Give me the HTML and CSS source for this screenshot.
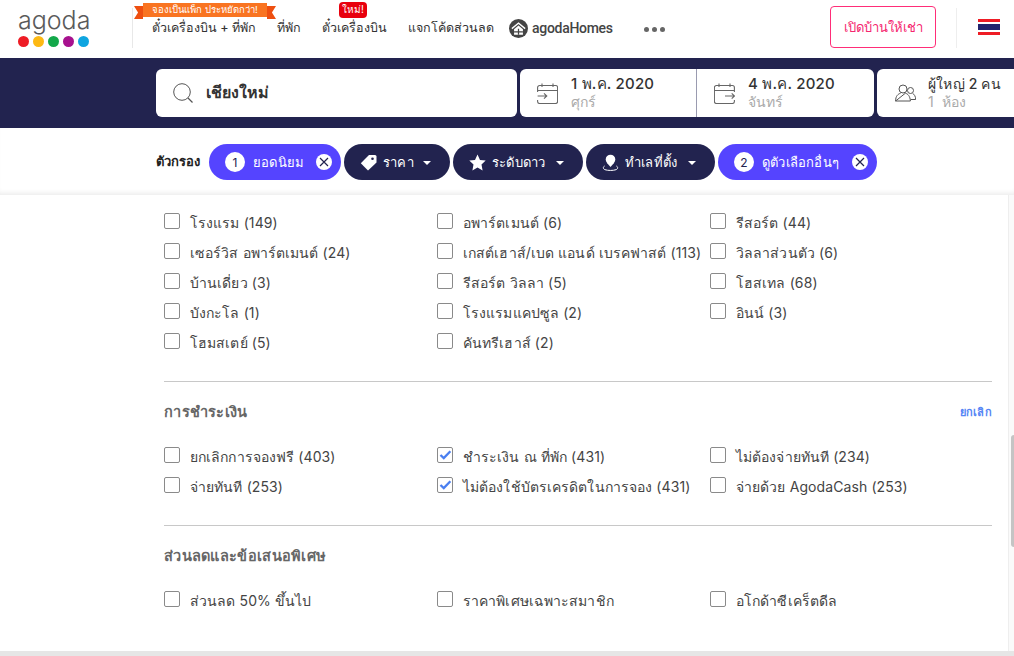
FILE: index.html
```html
<!DOCTYPE html>
<html lang="th">
<head>
<meta charset="utf-8">
<title>agoda</title>
<link rel="stylesheet" href="styles.css">
</head>
<body>
<header class="topbar">
  <div class="logo">
    <div class="logo-word">agoda</div>
    <div class="dots"><i class="d1"></i><i class="d2"></i><i class="d3"></i><i class="d4"></i><i class="d5"></i></div>
  </div>
  <nav class="nav">
    <a class="nav-item first"><span class="ribbon">จองเป็นแพ็ก ประหยัดกว่า!</span>ตั๋วเครื่องบิน + ที่พัก</a>
    <a class="nav-item">ที่พัก</a>
    <a class="nav-item"><span class="new">ใหม่!</span>ตั๋วเครื่องบิน</a>
    <a class="nav-item">แจกโค้ดส่วนลด</a>
    <a class="nav-item homes">
      <svg class="home-ico" width="19" height="19" viewBox="0 0 18 18"><circle cx="9" cy="9" r="9" fill="#444"/><path d="M9 3 2.300 8.600l.8 1L9 4.700l5.900 4.900.8-1z" fill="#fff"/><path d="M4.800 9.600 9 6.100l4.200 3.500V15H4.800z" fill="#fff"/><path d="M8.400 9.300h1.200V15H8.400zM4.800 11.700h8.400v1H4.800z" fill="#444"/></svg>
      agodaHomes
    </a>
    <span class="more"><i></i><i></i><i></i></span>
  </nav>
  <a class="list-btn">เปิดบ้านให้เช่า</a>
  <span class="flag-sep"><span class="flag"></span></span>
</header>

<section class="searchband">
  <div class="box search">
    <svg width="20" height="20" viewBox="0 0 20 20" fill="none" stroke="#555" stroke-width="1"><circle cx="9" cy="9" r="8.300"/><path d="M15 15l4.500 4.500" stroke-width="1.300"/></svg>
    <span class="q">เชียงใหม่</span>
  </div>
  <div class="box dates">
    <div class="date">
      <svg width="21" height="21" viewBox="0 0 21 21" fill="none" stroke="#666" stroke-width="1.100"><path d="M.6 9V4.500a2 2 0 0 1 2-2h16a2 2 0 0 1 2 2v14a2 2 0 0 1-2 2h-16a2 2 0 0 1-2-2V17M.6 7.500h20M5 .5v3.500M16 .5v3.500M.6 13h9M7 10.300 9.800 13 7 15.700"/></svg>
      <div class="dt"><div class="l1">1 พ.ค. 2020</div><div class="l2">ศุกร์</div></div>
    </div>
    <div class="date second">
      <svg width="21" height="21" viewBox="0 0 21 21" fill="none" stroke="#666" stroke-width="1.100"><path d="M20.400 9V4.500a2 2 0 0 0-2-2h-16a2 2 0 0 0-2 2v14a2 2 0 0 0 2 2h16a2 2 0 0 0 2-2V17M.6 7.500h20M5 .5v3.500M16 .5v3.500M11 13h9.500M17.700 10.300 20.500 13l-2.800 2.700"/></svg>
      <div class="dt"><div class="l1">4 พ.ค. 2020</div><div class="l2">จันทร์</div></div>
    </div>
  </div>
  <div class="box occ">
    <svg width="21" height="18" viewBox="0 0 21 18" fill="none" stroke="#555" stroke-width="1"><circle cx="8" cy="5" r="4"/><path d="M.6 17c0-5 2.400-7 5-7.800M10.400 9.200c2.600.8 4.600 2.800 5 7.800H.6z"/><circle cx="15.500" cy="6.500" r="3"/><path d="M15.700 15.500h5c0-3-1.500-5.300-3-6"/></svg>
    <div class="dt"><div class="l1">ผู้ใหญ่ 2 คน</div><div class="l2">1 &nbsp;ห้อง</div></div>
  </div>
</section>

<section class="filters">
  <span class="f-label">ตัวกรอง</span>
  <span class="pill active p1"><b class="num">1</b>ยอดนิยม<b class="x"><svg width="10" height="10" viewBox="0 0 10 10" stroke="#22234f" stroke-width="1.200"><path d="M1 1l8 8M9 1l-8 8"/></svg></b></span>
  <span class="pill p2"><svg width="17" height="17" viewBox="0 0 17 17" fill="#fff"><path d="M9 1h6a1.500 1.500 0 0 1 1.500 1.500v6L8 16.500 .8 9.300z"/><circle cx="12.500" cy="4.800" r="1.300" fill="#22234f"/></svg>ราคา<i class="caret"></i></span>
  <span class="pill p3"><svg width="17" height="17" viewBox="0 0 17 17" fill="#fff"><path d="M8.500.5l2.500 5.400 5.700.7-4.200 4 1.100 5.900-5.100-2.900-5.100 2.900 1.100-5.900-4.200-4 5.700-.7z"/></svg>ระดับดาว<i class="caret"></i></span>
  <span class="pill p4"><svg width="17" height="17" viewBox="0 0 17 17" fill="#fff"><circle cx="8.500" cy="5.500" r="4.800"/><path d="M5 9l3.500 4L12 9z"/><path d="M2.500 12C1 13 .8 14.800 3 15.700c3 1 8 1 11 0 2.200-.9 2-2.700.5-3.700" fill="none" stroke="#fff"/></svg>ทำเลที่ตั้ง<i class="caret"></i></span>
  <span class="pill active p5"><b class="num">2</b>ดูตัวเลือกอื่นๆ<b class="x"><svg width="10" height="10" viewBox="0 0 10 10" stroke="#22234f" stroke-width="1.200"><path d="M1 1l8 8M9 1l-8 8"/></svg></b></span>
</section>

<main class="panel">
  <div class="scrollbar"><span class="thumb"></span></div>
  <div class="content">
    <div class="grid top">
      <label class="opt"><i class="cb"></i>โรงแรม (149)</label>
      <label class="opt"><i class="cb"></i>อพาร์ตเมนต์ (6)</label>
      <label class="opt"><i class="cb"></i>รีสอร์ต (44)</label>
      <label class="opt"><i class="cb"></i>เซอร์วิส อพาร์ตเมนต์ (24)</label>
      <label class="opt"><i class="cb"></i>เกสต์เฮาส์/เบด แอนด์ เบรคฟาสต์ (113)</label>
      <label class="opt"><i class="cb"></i>วิลลาส่วนตัว (6)</label>
      <label class="opt"><i class="cb"></i>บ้านเดี่ยว (3)</label>
      <label class="opt"><i class="cb"></i>รีสอร์ต วิลลา (5)</label>
      <label class="opt"><i class="cb"></i>โฮสเทล (68)</label>
      <label class="opt"><i class="cb"></i>บังกะโล (1)</label>
      <label class="opt"><i class="cb"></i>โรงแรมแคปซูล (2)</label>
      <label class="opt"><i class="cb"></i>อินน์ (3)</label>
      <label class="opt"><i class="cb"></i>โฮมสเตย์ (5)</label>
      <label class="opt"><i class="cb"></i>คันทรีเฮาส์ (2)</label>
    </div>
    <div class="section">
      <div class="sec-head"><h3>การชำระเงิน</h3><a class="clear">ยกเลิก</a></div>
      <div class="grid">
        <label class="opt"><i class="cb"></i>ยกเลิกการจองฟรี (403)</label>
        <label class="opt"><i class="cb on"><svg width="17" height="14" viewBox="0 0 17 14" fill="none" stroke="#4a7ff0" stroke-width="2.800"><path d="M3 7l4 3.800L15 2.500"/></svg></i>ชำระเงิน ณ ที่พัก (431)</label>
        <label class="opt"><i class="cb"></i>ไม่ต้องจ่ายทันที (234)</label>
        <label class="opt"><i class="cb"></i>จ่ายทันที (253)</label>
        <label class="opt"><i class="cb on"><svg width="17" height="14" viewBox="0 0 17 14" fill="none" stroke="#4a7ff0" stroke-width="2.800"><path d="M3 7l4 3.800L15 2.500"/></svg></i>ไม่ต้องใช้บัตรเครดิตในการจอง (431)</label>
        <label class="opt"><i class="cb"></i>จ่ายด้วย AgodaCash (253)</label>
      </div>
    </div>
    <div class="section">
      <div class="sec-head"><h3>ส่วนลดและข้อเสนอพิเศษ</h3></div>
      <div class="grid">
        <label class="opt"><i class="cb"></i>ส่วนลด 50% ขึ้นไป</label>
        <label class="opt"><i class="cb"></i>ราคาพิเศษเฉพาะสมาชิก</label>
        <label class="opt"><i class="cb"></i>อโกด้าซีเคร็ตดีล</label>
      </div>
    </div>
    <div class="section end"></div>
  </div>
</main>
<div class="bottom"></div>
</body>
</html>
```
FILE: styles.css
```css
* { box-sizing: border-box; }
html, body { margin: 0; height: 656px; overflow: hidden; }
body { width: 1014px; background: #fff; color: #333; font-family: Inter, "Noto Sans", "Liberation Sans", sans-serif; font-size: 14px; }
i, b { font-style: normal; }

.topbar { height: 58px; display: flex; align-items: flex-start; background: #fff; }
.logo { width: 132px; padding: 7px 0 0 18px; flex: none; height: 50px; }
.logo-word { font-family: Inter, sans-serif; font-weight: 300; font-size: 25px; line-height: 26px; color: #5a5a5a; }
.dots { display: flex; gap: 4px; margin: 3px 0 0 0; }
.dots i { width: 11px; height: 11px; border-radius: 50%; }
.d1 { background: #ee1c25; } .d2 { background: #fdb913; } .d3 { background: #13a84a; } .d4 { background: #a7118e; } .d5 { background: #0fa5e0; }

.nav { height: 40px; margin-top: 8px; width: 698px; flex: none; border-left: 1px solid #e8e8e8; display: flex; align-items: flex-start; padding-left: 19px; gap: 21px; }
.nav-item { position: relative; padding-top: 10px; font-size: 12.5px; line-height: 20px; font-weight: 500; color: #333; white-space: nowrap; display: flex; align-items: center; gap: 4px; }
.ribbon { position: absolute; left: -9px; top: -5px; width: 124px; height: 14px; background: #f97421; color: #fff; font-size: 9.5px; line-height: 14px; font-weight: 400; text-align: center; }
.ribbon::before, .ribbon::after { content: ""; position: absolute; top: 3px; width: 9px; height: 13px; background: #ee4f10; }
.ribbon::before { left: -9px; clip-path: polygon(0 0, 100% 0, 100% 100%, 0 100%, 45% 50%); }
.ribbon::after { right: -9px; clip-path: polygon(0 0, 100% 0, 55% 50%, 100% 100%, 0 100%); }
.new { position: absolute; left: 17px; top: -6px; height: 16px; padding: 0 3px; background: #e8000d; color: #fff; font-size: 10px; line-height: 15px; font-weight: 400; border-radius: 4px; }
.home-ico { flex: none; }
.homes { margin-left: -6px; color: #444; font-family: Roboto, sans-serif; font-size: 14px; letter-spacing: -.3px; }
.more { display: flex; gap: 3px; margin: 19px 0 0 10px; }
.more i { width: 5px; height: 5px; border-radius: 50%; background: #666; }

.list-btn { margin-top: 6px; width: 106px; height: 42px; flex: none; border: 1px solid #ff2d78; border-radius: 4px; color: #f5266f; font-size: 13px; font-weight: 500; display: flex; align-items: center; justify-content: center; }
.flag-sep { margin: 8px 0 0 20px; width: 58px; height: 40px; border-left: 1px solid #eee; padding: 11px 0 0 21px; flex: none; }
.flag { display: block; width: 22px; height: 16px; background: linear-gradient(#ee1c25 0 3px, #fff 3px 5px, #22246e 5px 11px, #fff 11px 13px, #ee1c25 13px); }

.searchband { height: 70px; background: #22234f; padding: 11px 0 0 156px; display: flex; gap: 3px; overflow: hidden; }
.box { height: 48px; background: #fff; border-radius: 6px; flex: none; display: flex; align-items: center; }
.search { width: 361px; padding-left: 17px; gap: 13px; }
.q { font-size: 16px; font-weight: 600; color: #333; margin-top: -2px; }
.dates { width: 354px; }
.date { width: 176px; height: 100%; padding-left: 17px; display: flex; align-items: center; gap: 13px; }
.date.second { width: 178px; border-left: 1px solid #9a9bb0; padding-left: 17px; }
.occ { width: 160px; padding-left: 18px; gap: 12px; }
.l1 { font-size: 15px; line-height: 18px; font-weight: 500; color: #333; white-space: nowrap; letter-spacing: .2px; }
.occ .l1 { font-size: 14px; }
.l2 { font-size: 14px; line-height: 18px; color: #aaa; }

.filters { height: 67px; padding: 16px 0 0 156px; display: flex; align-items: flex-start; background: #fff; box-shadow: inset 0 -5px 5px -3px #ececec; }
.f-label { width: 53px; font-size: 13px; font-weight: 600; line-height: 34px; color: #222; white-space: nowrap; letter-spacing: .1px; }
.pill { height: 36px; border-radius: 18px; background: #22234f; color: #fff; font-size: 13px; font-weight: 500; display: flex; align-items: center; white-space: nowrap; margin-right: 3px; padding-left: 16px; gap: 6px; position: relative; letter-spacing: .2px; }
.pill.active { background: #5544ff; }
.p1 { width: 132px; }
.p2 { width: 106px; }
.p3 { width: 130px; }
.p4 { width: 129px; }
.p5 { width: 159px; }
.num { width: 20px; height: 20px; border-radius: 50%; background: #fff; color: #22234f; font-size: 12px; font-weight: 400; display: flex; align-items: center; justify-content: center; margin-right: 2px; }
.x { position: absolute; right: 9px; top: 10px; width: 16px; height: 16px; border-radius: 50%; background: #fff; display: flex; align-items: center; justify-content: center; }
.caret { position: absolute; right: 19px; top: 17px; width: 0; height: 0; border: 4px solid transparent; border-top-color: #fff; border-bottom: 0; }

.panel { height: 456px; position: relative; background: #fff; overflow: hidden; }
.content { padding-left: 163px; width: 992px; }
.scrollbar { position: absolute; right: 0; top: 0; bottom: 0; width: 6px; background: #fafafa; border-left: 1px solid #eee; }
.thumb { position: absolute; left: 2px; top: 240px; width: 4px; height: 112px; background: #c4c4c4; border-radius: 3px 0 0 3px; }
.grid { display: grid; grid-template-columns: repeat(3, 273px); grid-auto-rows: 30px; }
.top { padding-top: 12px; height: 186px; }
.opt { display: flex; align-items: center; gap: 10px; padding-top: 1px; font-size: 14px; letter-spacing: .1px; color: #444; white-space: nowrap; }
.cb { width: 16px; height: 16px; flex: none; margin: -3px 0 0 1px; border: 1px solid #8a8a8a; border-radius: 2px; background: #fff; display: flex; align-items: center; justify-content: center; }
.section { border-top: 1px solid #c8c8c8; margin-left: 1px; height: 144px; padding-top: 15px; }
.section:last-of-type { height: 114px; }
.section.end { height: 20px; padding: 0; }
.section .grid { margin-left: -1px; padding-top: 0; }
.sec-head { height: 44px; display: flex; justify-content: space-between; }
h3 { margin: 1px 0 0; font-size: 14.5px; line-height: 28px; font-weight: 600; color: #666; letter-spacing: .3px; }
.clear { margin-top: 1px; font-size: 11px; line-height: 28px; font-weight: 600; color: #5485f5; letter-spacing: .3px; }
.bottom { height: 5px; background: #e6e6e6; }
```
